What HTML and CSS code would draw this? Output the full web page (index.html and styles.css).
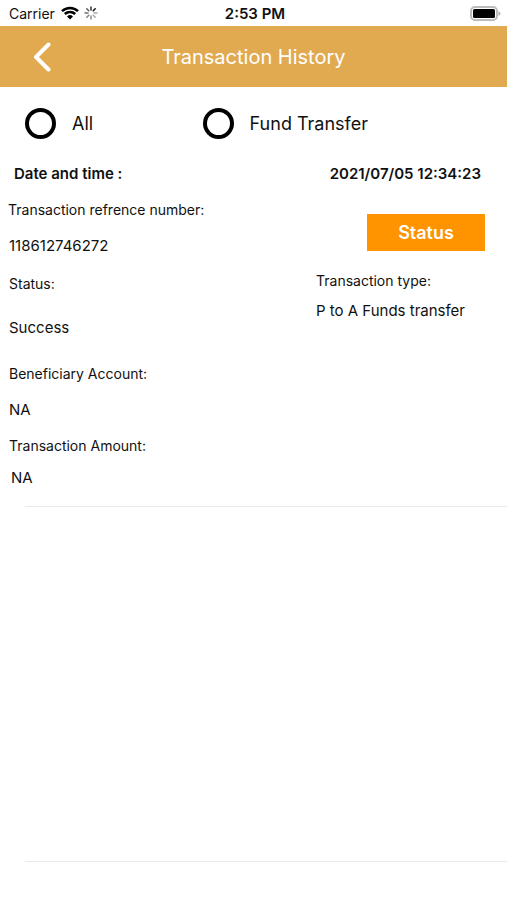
FILE: index.html
```html
<!DOCTYPE html>
<html lang="en">
<head>
<meta charset="utf-8">
<meta name="viewport" content="width=device-width, initial-scale=1">
<title>Transaction History</title>
<link rel="stylesheet" href="styles.css">
</head>
<body>
<div class="status-bar">
  <div class="carrier">
    <span>Carrier</span>
    <svg class="wifi" viewBox="0 0 18 14" aria-hidden="true">
      <path d="M1 5.2a11.5 11.5 0 0 1 16 0M3.8 8a7.5 7.5 0 0 1 10.4 0" fill="none" stroke="#000" stroke-width="2.5"/>
      <path d="M9 13.5 6 10.4a4.3 4.3 0 0 1 6 0z"/>
    </svg>
    <svg class="spinner" viewBox="0 0 14 14" aria-hidden="true" fill="none" stroke="#000" stroke-width="1.5" stroke-linecap="round">
      <path d="M7 1v3" opacity=".8"/>
      <path d="m11.2 2.8-2 2" opacity=".95"/>
      <path d="M13 7h-3" opacity=".35"/>
      <path d="m11.2 11.2-2-2" opacity=".35"/>
      <path d="M7 13v-3" opacity=".45"/>
      <path d="m2.8 11.2 2-2" opacity=".5"/>
      <path d="M1 7h3" opacity=".55"/>
      <path d="m2.8 2.8 2 2" opacity=".65"/>
    </svg>
  </div>
  <span class="clock">2:53 PM</span>
  <svg class="battery" viewBox="0 0 31 15" aria-hidden="true">
    <rect x="1" y="1" width="26" height="13" rx="4" fill="#fff" stroke="#bcbcbc" stroke-width="2"/>
    <rect x="3" y="3" width="22" height="9" rx="1.5"/>
    <path d="M28.5 5.2c2.6.8 2.6 3.8 0 4.6z" fill="#aaa"/>
  </svg>
</div>
<header class="nav">
  <button class="back" type="button" aria-label="Back">
    <svg viewBox="0 0 18 30" aria-hidden="true"><path d="M15.500 2.500 3 15l12.500 12.500" fill="none" stroke="#fff" stroke-width="4" stroke-linecap="round" stroke-linejoin="round"/></svg>
  </button>
  <h1>Transaction History</h1>
</header>
<main>
  <form class="filters">
    <label><input type="radio" name="filter" value="all">All</label>
    <label><input type="radio" name="filter" value="fund">Fund Transfer</label>
  </form>
  <article class="record">
    <div class="date-row"><span>Date and time :</span><time datetime="2021-07-05T12:34:23">2021/07/05 12:34:23</time></div>
    <div class="columns">
      <dl class="details">
        <dt class="reference">Transaction refrence number:</dt>
        <dd>118612746272</dd>
        <dt class="state">Status:</dt>
        <dd class="state-value">Success</dd>
        <dt class="account">Beneficiary Account:</dt>
        <dd>NA</dd>
        <dt>Transaction Amount:</dt>
        <dd class="amount">NA</dd>
      </dl>
      <div class="side">
        <button class="status-button" type="button">Status</button>
        <dl>
          <dt>Transaction type:</dt>
          <dd class="type">P to A Funds transfer</dd>
        </dl>
      </div>
    </div>
  </article>
  <div class="empty-row"></div>
</main>
</body>
</html>
```
FILE: styles.css
```css
* {
  box-sizing: border-box;
}

body {
  margin: 0;
  background: #fff;
  color: #111;
  font: 14px/20px Inter, "Liberation Sans", sans-serif;
}

.status-bar {
  display: grid;
  grid-template-columns: 1fr auto 1fr;
  align-items: center;
  height: 26px;
  padding: 2px 6px 0 9px;
}

.carrier {
  display: flex;
  align-items: center;
}

.wifi {
  width: 18px;
  height: 14px;
  margin: 0 5px 2px 6px;
}

.spinner {
  width: 14px;
  height: 14px;
  margin-bottom: 2px;
}

.clock {
  font-size: 15px;
  font-weight: 600;
}

.battery {
  justify-self: end;
  width: 31px;
  height: 15px;
  margin-bottom: 2px;
}

.nav {
  display: grid;
  grid-template-columns: 64px 1fr 64px;
  align-items: center;
  height: 61px;
  background: #e1aa50;
  color: #fff;
}

.nav h1 {
  margin: 0;
  font-size: 20px;
  line-height: 24px;
  font-weight: 400;
  text-align: center;
}

.back {
  display: flex;
  padding: 0 0 0 33px;
  border: 0;
  background: none;
}

.back svg {
  width: 18px;
  height: 30px;
}

.filters {
  display: grid;
  grid-template-columns: 35fr 60fr;
  padding: 21px 0 0 25px;
}

.filters label {
  display: flex;
  align-items: center;
  gap: 16px;
  font-size: 18px;
}

.filters input {
  appearance: none;
  width: 31px;
  height: 31px;
  margin: 0;
  border: 4px solid #000;
  border-radius: 50%;
}

.filters input:checked {
  background: radial-gradient(#000 45%, transparent 50%);
}

.record {
  padding-top: 25px;
}

.date-row {
  display: flex;
  justify-content: space-between;
  padding: 0 26px 0 14px;
  font-size: 15px;
  font-weight: 600;
}

.columns {
  display: flex;
  justify-content: space-between;
  padding: 16px 22px 18px 9px;
}

dl,
dd {
  margin: 0;
}

dd {
  font-size: 15px;
}

dd,
.details dt {
  margin-top: 16px;
}

.details .reference {
  margin: 0 0 0 -1px;
}

.details .state {
  margin-top: 18px;
}

.details .state-value {
  margin-top: 24px;
}

.details .account {
  margin-top: 26px;
}

.details .amount {
  margin: 12px 0 0 2px;
}

.side {
  display: flex;
  flex-direction: column;
  width: 169px;
  padding-top: 14px;
}

.side .type {
  margin-top: 10px;
}

.status-button {
  align-self: flex-end;
  width: 118px;
  height: 37px;
  margin-bottom: 20px;
  padding: 0;
  border: 0;
  background: #ff9300;
  color: #fff;
  font: 600 18px/24px Inter, "Liberation Sans", sans-serif;
}

.empty-row {
  height: 356px;
  margin-left: 25px;
  border: solid #e9e9e9;
  border-width: 1px 0;
}
```
